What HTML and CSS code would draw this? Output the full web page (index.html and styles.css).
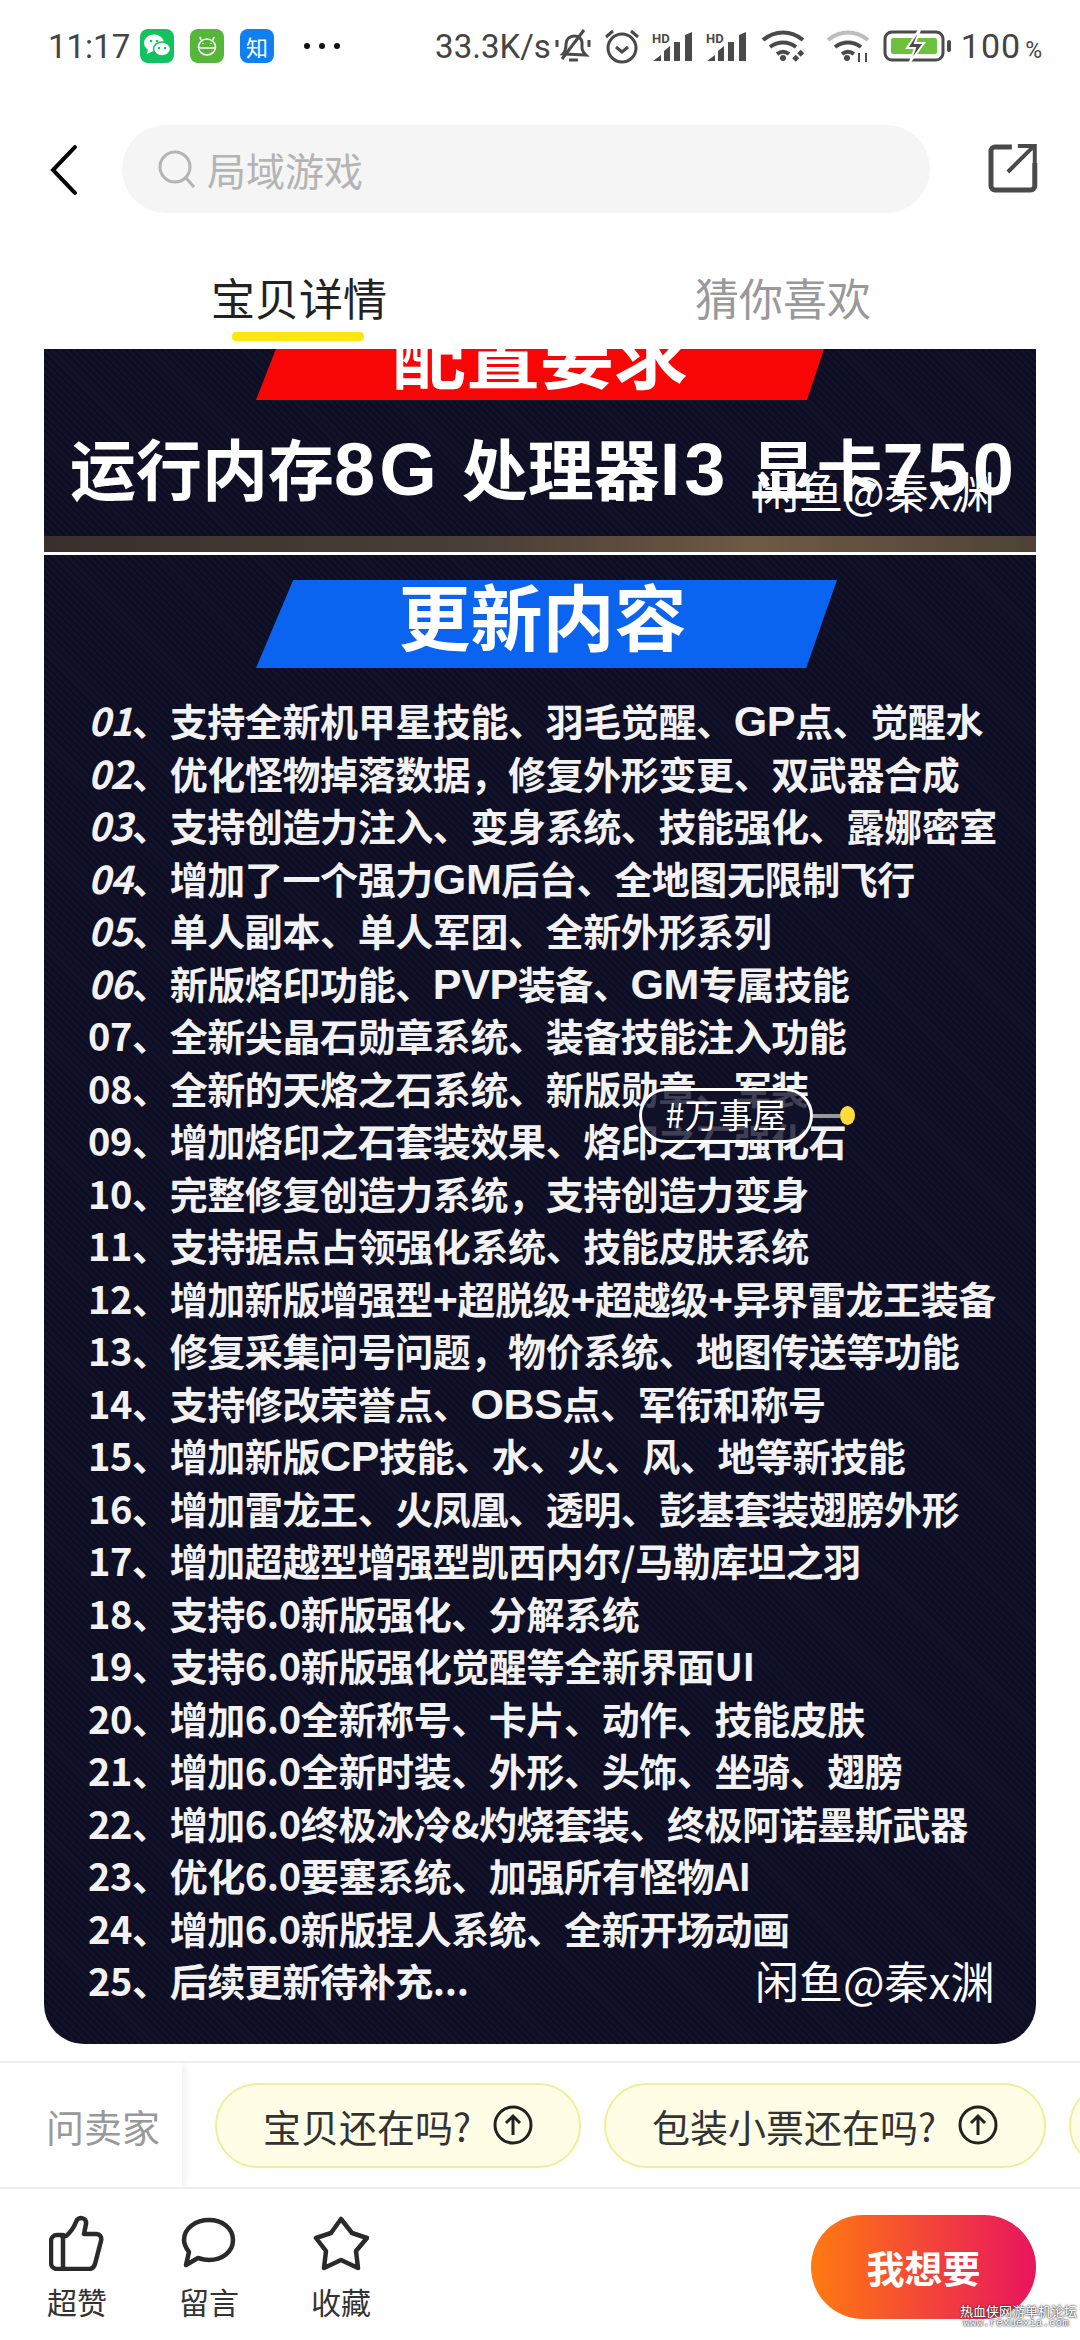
FILE: index.html
```html
<!DOCTYPE html>
<html>
<head>
    <title>宝贝详情</title>
    <link rel="stylesheet" href="styles.css">
</head>
<body>
    <!-- Status bar -->
    <div class="status">
        <div class="status-left">
            <span class="time">11:17</span>
            <span class="app-icon wechat">
                <svg viewBox="0 0 34 34" width="34" height="34">
                    <ellipse cx="14" cy="14" rx="10" ry="8.5" fill="#fff"/>
                    <path d="M8 20l-1 5 6-3z" fill="#fff"/>
                    <ellipse cx="22" cy="20" rx="8.5" ry="7" fill="#fff" stroke="#12c25f" stroke-width="1.5"/>
                    <circle cx="11" cy="12" r="1.3" fill="#12c25f"/><circle cx="17" cy="12" r="1.3" fill="#12c25f"/>
                    <circle cx="19" cy="19" r="1.2" fill="#12c25f"/><circle cx="25" cy="19" r="1.2" fill="#12c25f"/>
                </svg>
            </span>
            <span class="app-icon frog">
                <svg viewBox="0 0 34 34" width="34" height="34" fill="none" stroke="#fff" stroke-width="1.6">
                    <path d="M11 11l-1-3M23 11l1-3"/>
                    <ellipse cx="17" cy="18" rx="8.5" ry="8"/>
                    <path d="M9 19h16M13 14v1M21 14v1"/>
                </svg>
            </span>
            <span class="app-icon zhi">知</span>
            <span class="dots"><i></i><i></i><i></i></span>
        </div>
        <div class="status-right">
            <span class="speed">33.3K/s</span>
            <svg class="ico-bell" viewBox="0 0 36 34" width="36" height="34" fill="none" stroke="#4a4a4a" stroke-width="3">
                <path d="M8 25c3-3 3-6 3-10 0-5 4-8 8-8s7 2 8 6v6c0 3 2 5 4 7z"/>
                <path d="M14 31h9" stroke-width="3"/>
                <path d="M29 1L7 30"/>
                <path d="M2 11v7M34 11v7"/>
            </svg>
            <svg class="ico-alarm" viewBox="0 0 36 36" width="36" height="36" fill="none" stroke="#4a4a4a" stroke-width="3">
                <circle cx="18" cy="20" r="14"/>
                <path d="M12 19l6 5 6-5"/>
                <path d="M2 9l7-6M34 9l-7-6"/>
            </svg>
            <svg class="ico-signal" viewBox="0 0 42 32" width="42" height="32">
                <text x="0" y="13" class="hd">HD</text>
                <path d="M1 31l8-6v6zM12 31V21l6-5v15zM22 31V12h6v19zM33 31V5l7-3v29z" fill="#4a4a4a"/>
            </svg>
            <svg class="ico-signal" viewBox="0 0 42 32" width="42" height="32">
                <text x="0" y="13" class="hd">HD</text>
                <path d="M1 31l8-6v6zM12 31V21l6-5v15zM22 31V12h6v19zM33 31V5l7-3v29z" fill="#4a4a4a"/>
            </svg>
            <svg class="ico-wifi" viewBox="0 0 50 32" width="50" height="32" fill="none" stroke="#4a4a4a" stroke-width="4">
                <path d="M2 10c12-10 28-10 40 0M9 17c8-6 18-6 26 0M16 24c4-3 8-3 12 0"/>
                <circle cx="22" cy="28" r="3" fill="#4a4a4a" stroke="none"/>
                <path d="M33 30l10-10" stroke-width="5" stroke-dasharray="5 2"/>
            </svg>
            <svg class="ico-wifi2" viewBox="0 0 44 34" width="44" height="34" fill="none" stroke="#4a4a4a" stroke-width="4">
                <path d="M2 11c12-10 28-10 40 0" stroke="#bdbdbd"/>
                <path d="M9 18c8-6 18-6 26 0M16 25c4-3 8-3 12 0"/>
                <circle cx="21" cy="29" r="3" fill="#4a4a4a" stroke="none"/>
                <path d="M33 24v9M40 33v-9" stroke-width="2"/>
            </svg>
            <svg class="ico-battery" viewBox="0 0 68 32" width="68" height="32">
                <rect x="2" y="2" width="58" height="28" rx="7" fill="none" stroke="#4a4a4a" stroke-width="3"/>
                <rect x="8" y="8" width="46" height="16" rx="2" fill="#6cc23c"/>
                <rect x="64" y="10" width="4" height="12" rx="2" fill="#4a4a4a"/>
                <path d="M36 0L24 18h8l-5 14 14-19h-9l5-13z" fill="#4a4a4a" stroke="#fff" stroke-width="2"/>
            </svg>
            <span class="pct">100<small>%</small></span>
        </div>
    </div>

    <!-- Search row -->
    <div class="topbar">
        <svg class="back" viewBox="0 0 28 50" width="28" height="50" fill="none" stroke="#000" stroke-width="4" stroke-linecap="round">
            <path d="M25 2L3 25l22 23"/>
        </svg>
        <div class="search">
            <svg viewBox="0 0 40 40" width="40" height="40" fill="none" stroke="#b4b4b4" stroke-width="3">
                <circle cx="18" cy="18" r="15"/>
                <path d="M29 29l8 9"/>
            </svg>
            <span>局域游戏</span>
        </div>
        <svg class="share" viewBox="0 0 50 50" width="50" height="50" fill="none" stroke="#4a4a4a" stroke-width="5">
            <path d="M24 4H7a4 4 0 0 0-4 4v35a4 4 0 0 0 4 4h36a4 4 0 0 0 4-4V20"/>
            <path d="M20 29L45 4M30 3h17v17" stroke-width="4"/>
        </svg>
    </div>

    <!-- Tabs -->
    <div class="tabs">
        <div class="tab active">宝贝详情</div>
        <div class="tab">猜你喜欢</div>
    </div>

    <!-- Detail picture -->
    <div class="card">
        <div class="spec">
            <div class="banner red"><span>配置要求</span></div>
            <div class="spec-line">运行内存<span class="en-big">8G</span> 处理器<span class="en-big">I3</span> 显卡<span class="en-big">750</span></div>
            <div class="mark mark-top">闲鱼@秦x渊</div>
            <div class="strip"></div>
        </div>
        <div class="updates">
            <div class="banner blue"><span>更新内容</span></div>
            <ol class="list">
                <li><em>01</em>、支持全新机甲星技能、羽毛觉醒、<span class="en">GP</span>点、觉醒水</li>
                <li><em>02</em>、优化怪物掉落数据，修复外形变更、双武器合成</li>
                <li><em>03</em>、支持创造力注入、变身系统、技能强化、露娜密室</li>
                <li><em>04</em>、增加了一个强力<span class="en">GM</span>后台、全地图无限制飞行</li>
                <li><em>05</em>、单人副本、单人军团、全新外形系列</li>
                <li><em>06</em>、新版烙印功能、<span class="en">PVP</span>装备、<span class="en">GM</span>专属技能</li>
                <li>07、全新尖晶石勋章系统、装备技能注入功能</li>
                <li>08、全新的天烙之石系统、新版勋章、军装</li>
                <li>09、增加烙印之石套装效果、烙印之石强化石</li>
                <li>10、完整修复创造力系统，支持创造力变身</li>
                <li>11、支持据点占领强化系统、技能皮肤系统</li>
                <li>12、增加新版增强型<span class="en">+</span>超脱级<span class="en">+</span>超越级<span class="en">+</span>异界雷龙王装备</li>
                <li>13、修复采集问号问题，物价系统、地图传送等功能</li>
                <li>14、支持修改荣誉点、<span class="en">OBS</span>点、军衔和称号</li>
                <li>15、增加新版<span class="en">CP</span>技能、水、火、风、地等新技能</li>
                <li>16、增加雷龙王、火凤凰、透明、彭基套装翅膀外形</li>
                <li>17、增加超越型增强型凯西内尔/马勒库坦之羽</li>
                <li>18、支持6.0新版强化、分解系统</li>
                <li>19、支持6.0新版强化觉醒等全新界面UI</li>
                <li>20、增加6.0全新称号、卡片、动作、技能皮肤</li>
                <li>21、增加6.0全新时装、外形、头饰、坐骑、翅膀</li>
                <li>22、增加6.0终极冰冷&amp;灼烧套装、终极阿诺墨斯武器</li>
                <li>23、优化6.0要塞系统、加强所有怪物AI</li>
                <li>24、增加6.0新版捏人系统、全新开场动画</li>
                <li>25、后续更新待补充...</li>
            </ol>
            <div class="mark mark-bottom">闲鱼@秦x渊</div>
            <!-- Tag floating over the list -->
            <div class="tag"><span class="tag-pill">#万事屋</span><span class="tag-line"></span><span class="tag-dot"></span></div>
        </div>
    </div>

    <!-- Ask the seller -->
    <div class="ask">
        <div class="ask-label">问卖家</div>
        <div class="chips">
            <div class="chip">宝贝还在吗?
                <svg viewBox="0 0 40 40" width="40" height="40" fill="none" stroke="#222" stroke-width="3"><circle cx="20" cy="20" r="18"/><path d="M20 30V11M13 18l7-7 7 7"/></svg>
            </div>
            <div class="chip">包装小票还在吗?
                <svg viewBox="0 0 40 40" width="40" height="40" fill="none" stroke="#222" stroke-width="3"><circle cx="20" cy="20" r="18"/><path d="M20 30V11M13 18l7-7 7 7"/></svg>
            </div>
            <div class="chip">宝贝还在吗?</div>
        </div>
    </div>

    <!-- Bottom actions -->
    <div class="actions">
        <div class="action">
            <svg viewBox="0 0 56 56" width="56" height="56" fill="none" stroke="#2a2a2a" stroke-width="4.5" stroke-linejoin="round" stroke-linecap="round">
                <path d="M13 20H8a6 6 0 0 0-6 6v22a6 6 0 0 0 6 6h32c3 0 5-2 6-5l6-23c1-4-1-7-5-7H35l2-10c1-7-8-8-10-2-2 5-5 10-10 14h-4z"/>
                <path d="M14 20v34"/>
            </svg>
            <span>超赞</span>
        </div>
        <div class="action">
            <svg viewBox="0 0 56 56" width="56" height="56" fill="none" stroke="#2a2a2a" stroke-width="4.5" stroke-linejoin="round">
                <path d="M28 5c13 0 24 8 24 20s-11 20-24 20c-4 0-8-1-11-2L5 50l3-13c-3-4-5-8-5-12C3 13 15 5 28 5z"/>
            </svg>
            <span>留言</span>
        </div>
        <div class="action">
            <svg viewBox="0 0 56 56" width="56" height="56" fill="none" stroke="#2a2a2a" stroke-width="4.5" stroke-linejoin="round">
                <path d="M28 4l11 14 15 5-11 13 2 17-17-8-17 8 2-17L3 23l15-5z"/>
            </svg>
            <span>收藏</span>
        </div>
        <div class="want">我想要</div>
    </div>

    <!-- Forum stamp on the corner of the shot -->
    <div class="stamp">热血侠网游单机论坛<span>www.rexuexia.com</span></div>
</body>
</html>
```

FILE: styles.css
```css
/* Reset default margin and padding */
* {
    margin: 0;
    padding: 0;
    box-sizing: border-box;
}

body {
    width: 1080px;
    height: 2340px;
    overflow: hidden;
    position: relative;
    display: flex;
    flex-direction: column;
    background-color: #fff;
    font-family: "Noto Sans CJK SC", "Noto Sans", sans-serif;
}

/* Status bar */
.status {
    height: 92px;
    padding: 0 37px 0 48px;
    display: flex;
    align-items: center;
    justify-content: space-between;
    color: #444;
    font-family: Roboto, "Noto Sans", sans-serif;
}

.status-left,
.status-right {
    display: flex;
    align-items: center;
}

.time {
    font-size: 33px;
    width: 92px;
}

.app-icon {
    width: 34px;
    height: 34px;
    border-radius: 8px;
    margin-right: 16px;
    display: flex;
    align-items: center;
    justify-content: center;
    color: #fff;
    font-size: 22px;
    font-family: "Noto Sans CJK SC", sans-serif;
}

.wechat { background-color: #12c25f; }
.frog { background-color: #55b63a; }
.zhi { background-color: #0f80f0; }

.dots {
    display: flex;
    gap: 9px;
    margin-left: 14px;
}

.dots i {
    width: 6px;
    height: 6px;
    border-radius: 50%;
    background-color: #111;
}

.speed {
    font-size: 33px;
    margin-right: 4px;
}

.ico-bell { margin-right: 13px; }
.ico-alarm { margin-right: 12px; }
.ico-signal { margin-right: 12px; }
.ico-wifi { margin-right: 15px; margin-left: 1px; }
.ico-wifi2 { margin-right: 13px; }
.ico-battery { margin-right: 10px; }

.hd {
    font-size: 13px;
    font-weight: 700;
    fill: #4a4a4a;
    font-family: Roboto, sans-serif;
}

.pct {
    font-size: 34px;
    letter-spacing: 1px;
}

.pct small {
    font-size: 23px;
    margin-left: 4px;
}

/* Search row */
.topbar {
    height: 154px;
    padding: 33px 42px 0 50px;
    display: flex;
    align-items: flex-start;
}

.back {
    margin-top: 20px;
    margin-right: 44px;
}

.search {
    width: 812px;
    height: 88px;
    border-radius: 44px;
    background-color: #f5f5f5;
    padding-left: 35px;
    display: flex;
    align-items: center;
    gap: 10px;
    color: #b4b4b4;
    font-size: 39px;
}

.share {
    margin-top: 18px;
    margin-left: 58px;
}

/* Tabs */
.tabs {
    height: 103px;
    padding-left: 211px;
    display: flex;
    gap: 308px;
}

.tab {
    font-size: 44px;
    line-height: 103px;
    color: #999;
    position: relative;
}

.tab.active {
    color: #222;
}

.tab.active::after {
    content: "";
    position: absolute;
    left: 21px;
    right: 23px;
    top: 86px;
    height: 9px;
    border-radius: 4px;
    background-color: #ffe60f;
}

/* Detail picture */
.card {
    margin: 0 44px;
    height: 1695px;
    display: flex;
    flex-direction: column;
    gap: 3px;
    border-radius: 0 0 40px 40px;
    overflow: hidden;
    color: #fff;
}

.spec,
.updates {
    position: relative;
    background-color: #11112a;
    background-image: repeating-linear-gradient(45deg, rgba(0, 0, 0, 0.22) 0 2px, transparent 2px 5px);
}

.spec {
    height: 203px;
}

.updates {
    flex: 1;
    padding-top: 25px;
}

.banner {
    margin-left: 212px;
    display: flex;
    justify-content: center;
    font-weight: 700;
}

.banner.red {
    width: 568px;
    height: 51px;
    overflow: hidden;
    background-color: #f80505;
    clip-path: polygon(3.5% 0, 100% 0, 97% 100%, 0 100%);
    font-size: 74px;
    line-height: 1;
}

.banner.red span {
    margin-top: -35px;
}

.banner.blue {
    width: 581px;
    height: 88px;
    background-color: #0a64f0;
    clip-path: polygon(6.4% 0, 100% 0, 94.7% 100%, 0 100%);
    font-size: 72px;
    line-height: 68px;
    padding-right: 8px;
}

.spec-line {
    margin-top: 21px;
    padding-left: 26px;
    font-size: 66px;
    font-weight: 700;
    line-height: 90px;
    word-spacing: 6px;
    white-space: nowrap;
}

.en-big {
    font-family: "Liberation Sans", sans-serif;
    font-size: 74px;
    letter-spacing: 4px;
}

.strip {
    position: absolute;
    left: 0;
    right: 0;
    bottom: 0;
    height: 16px;
    background: linear-gradient(90deg, #3a2f2c, #4c3f38 45%, #6e5a44 72%, #4e4238);
}

.mark {
    position: absolute;
    font-size: 44px;
    line-height: 50px;
    white-space: nowrap;
}

.mark-top {
    left: 711px;
    top: 116px;
}

.mark-bottom {
    left: 711px;
    bottom: 39px;
}

/* Update rows */
.list {
    list-style: none;
    margin-top: 26px;
    padding-left: 44px;
}

.list li {
    height: 52.5px;
    line-height: 52.5px;
    font-size: 38px;
    font-weight: 700;
    letter-spacing: -0.4px;
    white-space: nowrap;
    color: #f2f2f2;
}

.list em {
    font-style: italic;
}

.en {
    font-family: "Liberation Sans", sans-serif;
    font-size: 43px;
    line-height: 1;
}

.tag {
    position: absolute;
    left: 595px;
    top: 533px;
    display: flex;
    align-items: center;
}

.tag-pill {
    width: 174px;
    height: 55px;
    border: 3px solid #fff;
    border-radius: 28px;
    background-color: rgba(17, 17, 42, 0.8);
    font-size: 34px;
    line-height: 46px;
    text-align: center;
    white-space: nowrap;
}

.tag-line {
    width: 27px;
    height: 4px;
    background-color: #999;
}

.tag-dot {
    width: 15px;
    height: 19px;
    border-radius: 50%;
    background-color: #ffdc3c;
}

/* Ask the seller */
.ask {
    margin-top: 17px;
    height: 128px;
    border-top: 2px solid #eee;
    border-bottom: 2px solid #eee;
    display: flex;
    align-items: center;
    overflow: hidden;
}

.ask-label {
    flex: none;
    width: 182px;
    height: 100%;
    padding-left: 46px;
    font-size: 38px;
    color: #999;
    white-space: nowrap;
    display: flex;
    align-items: center;
    box-shadow: 4px 0 8px rgba(0, 0, 0, 0.06);
}

.chips {
    display: flex;
    gap: 23px;
    padding-left: 33px;
}

.chip {
    flex: none;
    height: 85px;
    padding: 0 46px;
    border: 2px solid #f0ee9a;
    border-radius: 43px;
    background-color: #fffde6;
    display: flex;
    align-items: center;
    gap: 22px;
    font-size: 38px;
    color: #333;
    white-space: nowrap;
}

/* Bottom actions */
.actions {
    flex: 1;
    padding: 26px 44px 0 47px;
    display: flex;
    align-items: flex-start;
    gap: 72px;
}

.action {
    width: 60px;
    display: flex;
    flex-direction: column;
    align-items: center;
    gap: 8px;
    font-size: 30px;
    color: #333;
    white-space: nowrap;
}

.want {
    margin-left: auto;
    width: 225px;
    height: 104px;
    border-radius: 52px;
    background: linear-gradient(90deg, #ff7a10, #e8145f);
    color: #fff;
    font-size: 38px;
    font-weight: 700;
    line-height: 104px;
    text-align: center;
}

.stamp {
    position: absolute;
    right: 8px;
    bottom: 10px;
    width: 112px;
    font-size: 13px;
    line-height: 13px;
    color: #fff;
    text-shadow: 0 0 2px #333, 0 0 2px #333;
    text-align: center;
    white-space: nowrap;
}

.stamp span {
    display: block;
    font-family: "Liberation Mono", monospace;
    font-size: 11px;
}
```
